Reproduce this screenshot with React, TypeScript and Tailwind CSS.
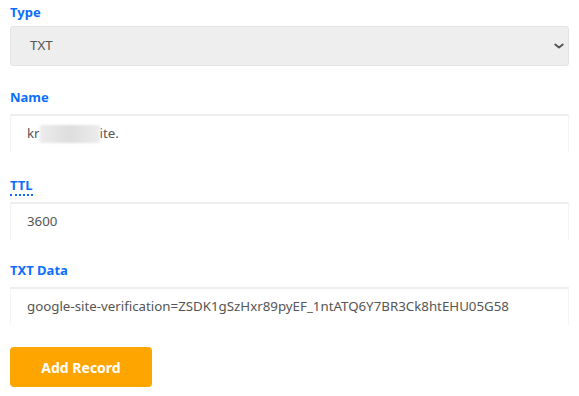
import React from 'react';

const font = { fontFamily: '"Segoe UI", "Noto Sans", "Open Sans", sans-serif' };

function Label({ children, abbr }: { children: React.ReactNode; abbr?: boolean }) {
  return (
    <div className="text-[13px] font-bold text-[#0b6efd] leading-[18px]">
      {abbr ? (
        <abbr title="Time To Live" className="no-underline border-b-2 border-dotted border-[#0b6efd]">
          {children}
        </abbr>
      ) : (
        children
      )}
    </div>
  );
}

function Field({ children }: { children: React.ReactNode }) {
  return (
    <div className="mt-[8px] h-[38px] w-[559px] flex items-center pl-[16px] text-[13.3px] text-[#555] border-t-2 border-x border-t-[#eeeeee] border-x-[#f4f4f4]">
      {children}
    </div>
  );
}

export default function App() {
  return (
    <div className="w-[579px] h-[396px] bg-white px-[10px] pt-[3px]" style={font}>
      <Label>Type</Label>
      <div className="mt-[5px] h-[40px] w-[559px] rounded-[3px] bg-[#eeeeee] border border-[#e3e3e3] flex items-center justify-between pl-[19px] pr-[3px] text-[13.3px] text-[#555]">
        <span>TXT</span>
        <svg width="12" height="12" viewBox="0 0 16 16" fill="none" stroke="#555" strokeWidth="2.6" strokeLinecap="round" strokeLinejoin="round">
          <path d="M3 6l5 4 5-4" />
        </svg>
      </div>

      <div className="mt-[22px]">
        <Label>Name</Label>
      </div>
      <Field>
        <span>kr</span>
        <span className="inline-block w-[60px] h-[18px] bg-gradient-to-r from-[#ececec] via-[#dedede] to-[#ececec] blur-[1px]" />
        <span>ite.</span>
      </Field>

      <div className="mt-[24px]">
        <Label abbr>TTL</Label>
      </div>
      <Field>3600</Field>

      <div className="mt-[21px]">
        <Label>TXT Data</Label>
      </div>
      <Field>google-site-verification=ZSDK1gSzHxr89pyEF_1ntATQ6Y7BR3Ck8htEHU05G58</Field>

      <button className="mt-[22px] w-[142px] h-[40px] rounded-[4px] bg-[#ffa500] text-white text-[14px] font-bold flex items-center justify-center">
        Add Record
      </button>
    </div>
  );
}
